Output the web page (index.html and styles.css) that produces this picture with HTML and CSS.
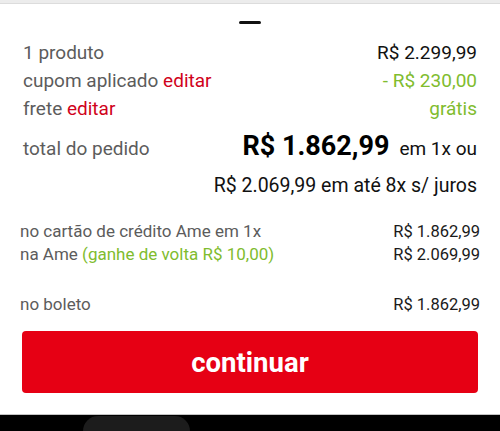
FILE: index.html
```html
<!DOCTYPE html>
<html>
  <head>
    <meta charset="utf-8" />
    <meta name="viewport" content="width=device-width, initial-scale=1.0" />
    <link rel="stylesheet" href="styles.css">
  </head>

  <body>
    <div class="topbar"></div>
    <div id="sheet">
      <div class="handle"></div>

      <div class="summary">
        <div class="row">
          <span class="label">1 produto</span>
          <span class="value">R$ 2.299,99</span>
        </div>
        <div class="row">
          <span class="label">cupom aplicado <a class="edit">editar</a></span>
          <span class="value green">- R$ 230,00</span>
        </div>
        <div class="row">
          <span class="label">frete <a class="edit">editar</a></span>
          <span class="value green">grátis</span>
        </div>
        <div class="row total">
          <span class="label">total do pedido</span>
          <span class="value"><b class="bigPrice">R$ 1.862,99</b><span class="small">em 1x ou</span></span>
        </div>
        <div class="installments">R$ 2.069,99 em até 8x s/ juros</div>
      </div>

      <div class="payments">
        <div class="payRow first">
          <span class="label">no cartão de crédito Ame em 1x</span>
          <span class="value">R$ 1.862,99</span>
        </div>
        <div class="payRow">
          <span class="label">na Ame <span class="green">(ganhe de volta R$ 10,00)</span></span>
          <span class="value">R$ 2.069,99</span>
        </div>
        <div class="payRow boleto">
          <span class="label">no boleto</span>
          <span class="value">R$ 1.862,99</span>
        </div>
      </div>

      <div class="spacer">
        <button id="continue">continuar</button>
      </div>
    </div>
    <div class="navbar">
      <div class="navPill"></div>
    </div>
  </body>
</html>
```

FILE: styles.css
```css
html {
  font-family: "Roboto", "Liberation Sans", sans-serif;
}

body {
  width: 500px;
  height: 431px;
  margin: 0;
  overflow: hidden;
  display: flex;
  flex-direction: column;
  background-color: #fff;
}

.topbar {
  height: 3px;
  background-color: #ececec;
  border-bottom: 1px solid #dcdcdc;
}

#sheet {
  display: flex;
  flex-direction: column;
}

.handle {
  width: 22px;
  height: 3px;
  margin: 17px auto 0;
  border-radius: 2px;
  background-color: #111;
}

.summary {
  margin-top: 15px;
  padding: 0 23px;
  font-size: 19px;
}

.row {
  display: flex;
  justify-content: space-between;
  align-items: baseline;
  line-height: 28px;
}

.label {
  color: #5c5c5c;
}

.value {
  color: #111;
}

.edit {
  color: #d0021b;
}

.green,
.value.green {
  color: #80bc2e;
}

.total {
  margin-top: 6px;
  line-height: 34px;
}

.bigPrice {
  font-size: 27px;
  font-weight: 700;
  color: #000;
}

.small {
  margin-left: 10px;
}

.installments {
  margin-top: 7px;
  line-height: 26px;
  font-size: 19.5px;
  text-align: right;
  color: #111;
}

.payments {
  padding: 0 20px;
  font-size: 17px;
}

.payRow {
  display: flex;
  justify-content: space-between;
  align-items: baseline;
  line-height: 22px;
}

.payRow .value {
  font-size: 16.5px;
  color: #1a1a1a;
}

.payRow.first {
  margin-top: 21px;
}

.payRow.boleto {
  margin-top: 27px;
}

.spacer {
  margin-top: 15px;
  padding: 0 22px;
}

#continue {
  width: 100%;
  height: 62px;
  border: none;
  border-radius: 4px;
  background-color: #e60014;
  color: #fff;
  font: inherit;
  font-size: 27.5px;
  font-weight: 700;
  cursor: pointer;
}

.navbar {
  flex: 1;
  margin-top: 21px;
  border-top: 1px solid #c4c4c4;
  background-color: #000;
  display: flex;
  padding: 1px 0 0 83px;
}

.navPill {
  width: 107px;
  border-radius: 34px 34px 0 0;
  background-color: #1c1c1c;
}
```
